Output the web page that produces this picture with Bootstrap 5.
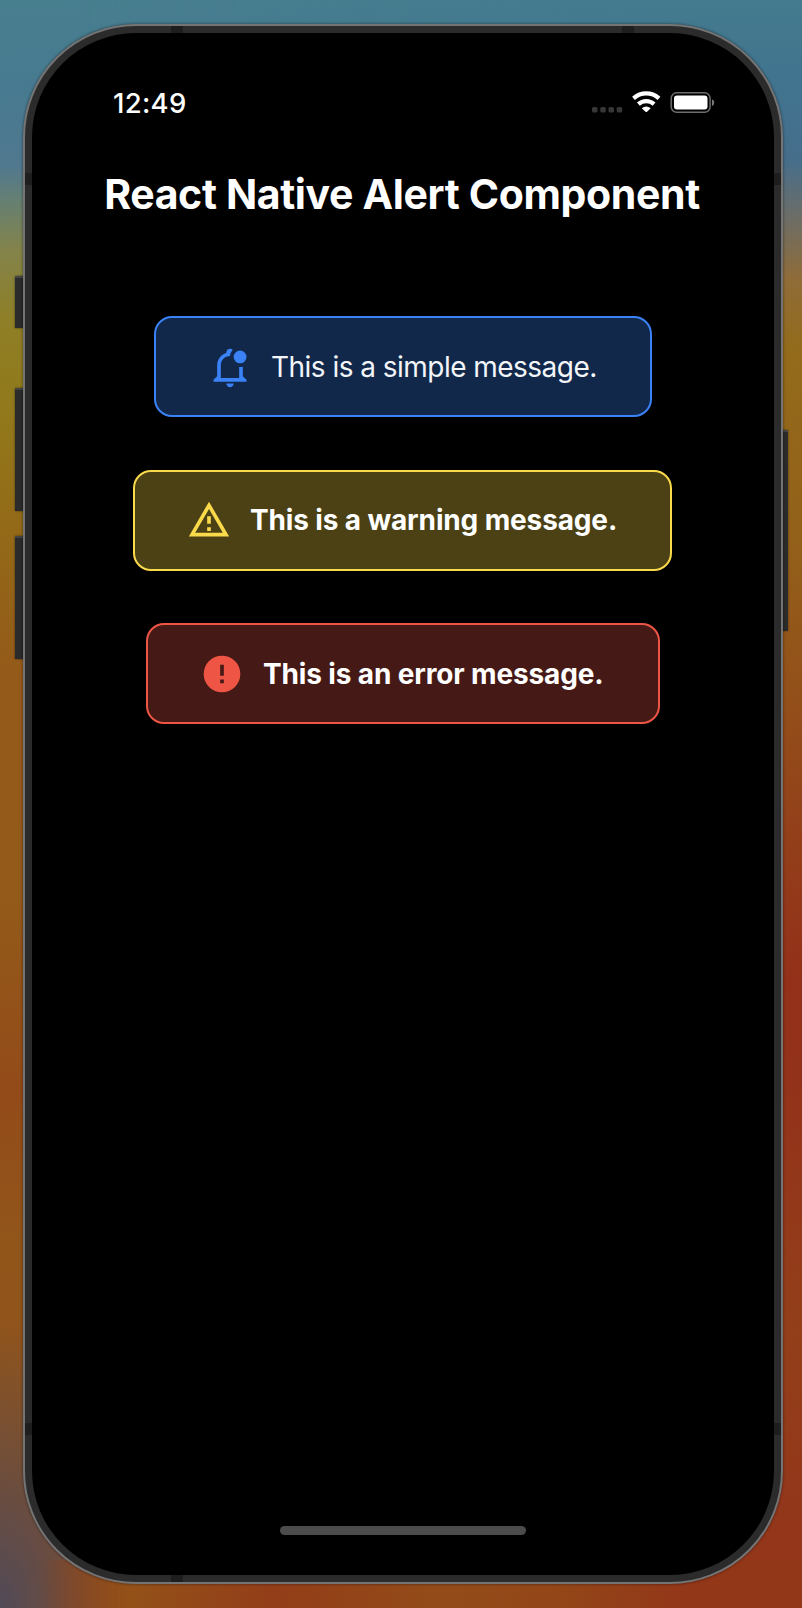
<!DOCTYPE html>
<html lang="en">
<head>
<meta charset="utf-8">
<meta name="viewport" content="width=device-width, initial-scale=1">
<title>React Native Alert Component</title>
<link href="https://cdn.jsdelivr.net/npm/bootstrap@5.3.0/dist/css/bootstrap.min.css" rel="stylesheet">
<style>
  body { font-family: Inter, sans-serif; width: 802px; height: 1608px; overflow: hidden; background: #93401a; }
  .wallpaper { width: 802px; height: 1608px; padding: 24px 19px 24px 23px; isolation: isolate; }
  .wall-left, .wall-right { position: absolute; inset: 0; z-index: -1; }
  .wall-left {
    background:
      radial-gradient(ellipse 145px 290px at 0 1608px, #504a58 0%, #504a5800 100%),
      linear-gradient(177deg, #487f8f 0, #477a90 90px, #50788f 165px, #68806f 205px, #83834a 250px, #8f7f26 320px, #92781a 420px, #936c18 510px, #945a19 670px, #935a19 900px, #934b19 1090px, #91551a 1240px, #91531b 1420px, #934e1a 1608px);
  }
  .wall-right {
    background:
      linear-gradient(90deg, #93551800 0, #935118 130px, #933e19 270px, #934018 310px, #934c19 440px, #934518 570px, #933719 680px, #933719 100%) 0 1560px / 100% 48px no-repeat,
      linear-gradient(#447b8e 0, #41738f 90px, #466e8b 160px, #6b6d68 215px, #906c38 280px, #936b1b 350px, #93611a 530px, #934f1a 700px, #93401a 830px, #933019 980px, #93321a 1080px, #933f1a 1330px, #93361a 1530px, #933719 1608px);
    -webkit-mask-image: linear-gradient(90deg, transparent 10%, #000 85%), linear-gradient(90deg, transparent 40px, #000 130px);
    -webkit-mask-size: 100% 1560px, 100% 48px;
    -webkit-mask-position: 0 0, 0 1560px;
    -webkit-mask-repeat: no-repeat;
  }
  .phone { height: 1560px; border-radius: 113px; padding: 9px; background: #2b2b2b; border: 2px solid #747474; box-shadow: 0 0 3px #0008; }
  .phone-screen { border-radius: 104px; background: #000; margin: -2px; width: 742px; height: 1542px; }
  .side-key { position: absolute; background: #2b2b2b; border-top: 2px solid #444; box-shadow: 0 0 2px #0008; z-index: -1; }
  .antenna { position: absolute; background: #1e1e1e; }
  .status-bar { height: 67px; padding: 57px 59px 0 81px; }
  .clock { font-size: 27.5px; line-height: 20px; font-weight: 500; margin-top: 3px; letter-spacing: 0.3px; }
  .page-title { font-size: 41px; line-height: 50px; font-weight: 700; letter-spacing: -0.36px; margin: 69px 2px 0 0; white-space: nowrap; }
  .alert-stack { margin-top: 97px; gap: 52.5px; }
  .notice { height: 101px; border: 2px solid; border-radius: 18px; padding: 0 0 0 52px; white-space: nowrap; margin: 0; }
  .notice svg { width: 44px; height: 44px; fill: currentColor; flex: none; }
  .notice span { font-size: 28px; line-height: 40px; margin-left: 19px; color: #fff; font-weight: 700; letter-spacing: -0.14px; }
  .notice-simple { width: 498px; color: #3b82f6; background: #11284b; }
  .notice-simple span { font-weight: 400; letter-spacing: -0.53px; color: #f3f5f8; }
  .notice-warning { width: 539px; margin-right: 1px; color: #fad94a; background: #4b4115; }
  .notice-error { width: 514px; color: #ee5545; background: #451a16; }
  .home-bar { width: 246px; height: 9px; border-radius: 5px; background: #4c4c4c; margin-bottom: 40px; }
</style>
</head>
<body class="m-0">
<div class="wallpaper position-relative">
  <div class="wall-left"></div>
  <div class="wall-right"></div>
  <i class="side-key" style="left:15px;top:276px;width:12px;height:52px"></i>
  <i class="side-key" style="left:15px;top:388px;width:12px;height:123px"></i>
  <i class="side-key" style="left:15px;top:536px;width:12px;height:123px"></i>
  <i class="side-key" style="left:780px;top:430px;width:8px;height:201px"></i>
  <div class="phone">
    <main class="phone-screen d-flex flex-column align-items-center text-white">
      <header class="status-bar w-100 d-flex justify-content-between align-items-start">
        <span class="clock">12:49</span>
        <svg width="124" height="24" viewBox="591 90 124 24">
          <g fill="#363636"><rect x="592" y="107" width="5.5" height="5.6" rx="1.6"/><rect x="600.3" y="107" width="5.5" height="5.6" rx="1.6"/><rect x="608.5" y="107" width="5.5" height="5.6" rx="1.6"/><rect x="616.7" y="107" width="5.5" height="5.6" rx="1.6"/></g>
          <g fill="none" stroke="#fff" stroke-width="4.3"><path d="M633.5 98.4C641 91.8 651.500 91.800 659 98.400"/><path d="M638.4 104.200C643 100.200 649.500 100.200 654.100 104.200"/></g>
          <path fill="#fff" d="M641.800 108.300q4.450-3.600 8.900 0l-3.700 3.500q-.75.6-1.500 0z"/>
          <rect x="671.200" y="92.800" width="38.900" height="19.500" rx="5.500" fill="none" stroke="#6c6c6c" stroke-width="1.500"/>
          <rect x="674" y="95.500" width="33.500" height="14" rx="3" fill="#fff"/>
          <path d="M712 99.200q2.300 1 2.300 3.400t-2.300 3.400z" fill="#777"/>
        </svg>
      </header>
      <h1 class="page-title">React Native Alert Component</h1>
      <section class="alert-stack d-flex flex-column align-items-center">
        <div class="notice notice-simple d-flex align-items-center" role="alert">
          <svg viewBox="0 0 24 24"><path d="M19 17v-5.200c-.5.1-1 .2-1.500.2H17v6H7v-7c0-2.800 2.200-5 5-5 .1-1.300.7-2.400 1.500-3.300-.3-.4-.9-.7-1.500-.7-1.100 0-2 .9-2 2v.3c-3 .9-5 3.600-5 6.700v6l-2 2v1h18v-1zM10 21c0 1.100.9 2 2 2s2-.9 2-2zM21 6.500a3.500 3.500 0 1 1-7 0 3.500 3.500 0 0 1 7 0z"/></svg>
          <span>This is a simple message.</span>
        </div>
        <div class="notice notice-warning d-flex align-items-center" role="alert">
          <svg viewBox="0 0 24 24"><path fill-rule="evenodd" d="M12 2 1 21h22zM12 6l7.530 13H4.470zM11 10v4h2v-4zM11 16v2h2v-2z"/></svg>
          <span>This is a warning message.</span>
        </div>
        <div class="notice notice-error d-flex align-items-center" role="alert">
          <svg viewBox="0 0 24 24"><path fill-rule="evenodd" d="M12 2a10 10 0 1 0 0 20 10 10 0 0 0 0-20zM11 7h2v6h-2zM11 15h2v2h-2z"/></svg>
          <span>This is an error message.</span>
        </div>
      </section>
      <div class="home-bar mt-auto"></div>
    </main>
  </div>
  <i class="antenna" style="left:171px;top:26px;width:12px;height:7px"></i>
  <i class="antenna" style="left:622px;top:26px;width:12px;height:7px"></i>
  <i class="antenna" style="left:25px;top:173px;width:7px;height:12px"></i>
  <i class="antenna" style="left:774px;top:173px;width:7px;height:12px"></i>
  <i class="antenna" style="left:25px;top:1423px;width:7px;height:12px"></i>
  <i class="antenna" style="left:774px;top:1423px;width:7px;height:12px"></i>
  <i class="antenna" style="left:171px;top:1575px;width:12px;height:7px"></i>
</div>
<script src="https://cdn.jsdelivr.net/npm/bootstrap@5.3.0/dist/js/bootstrap.bundle.min.js"></script>
</body>
</html>
